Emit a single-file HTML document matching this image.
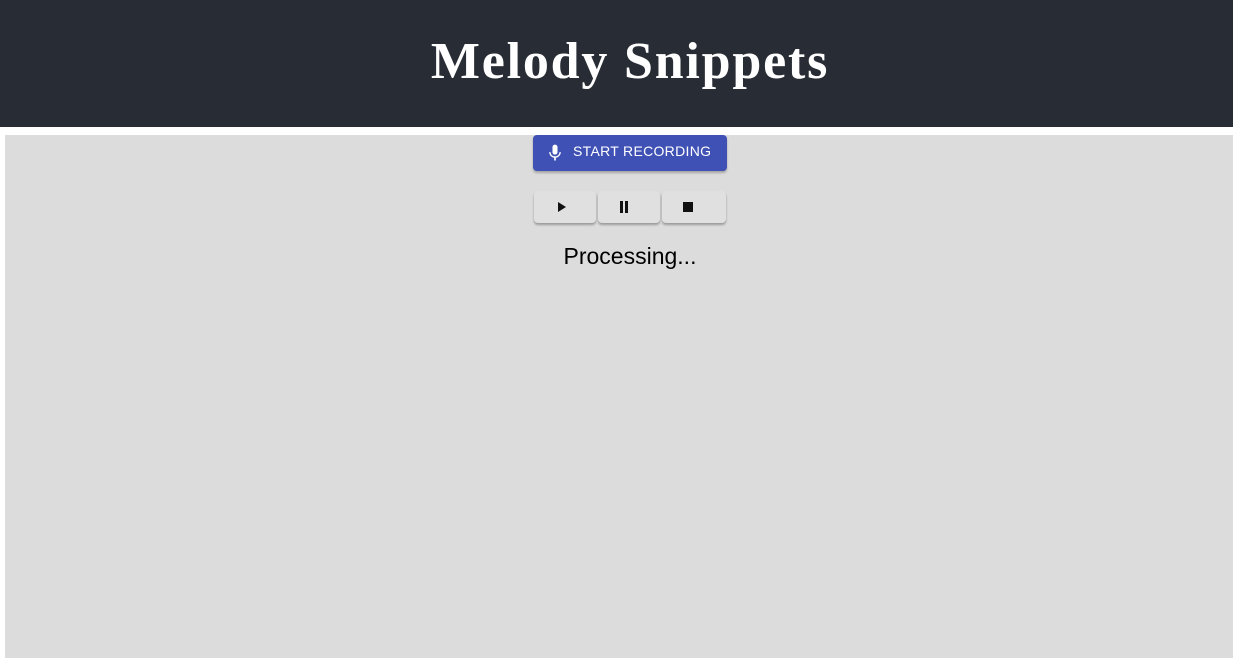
<!DOCTYPE html>
<html><head><style>
body{margin:0;width:1233px;height:658px;overflow:hidden;background:#fff;font-family:"Liberation Sans",sans-serif}
.hdr{position:absolute;left:0;top:0;width:1233px;height:127px;background:#282c34}
.hdr h1{margin:0;position:absolute;left:0;right:0;top:32px;text-align:center;color:#fff;font-family:"Liberation Serif",serif;font-weight:bold;font-size:52px;letter-spacing:1.8px;line-height:60px;padding-left:27px}
.panel{position:absolute;left:5px;top:135px;width:1228px;height:523px;background:#dcdcdc}
.rec{position:absolute;left:533px;top:135px;width:194px;height:36px;background:#3f51b5;border-radius:4px;box-shadow:0 2px 2px rgba(0,0,0,.25);color:#fff;font-size:14px;letter-spacing:.3px}
.rec span{position:absolute;left:40px;top:8px}
.rec svg{position:absolute;left:12px;top:8px}
.b{position:absolute;top:191px;height:32px;background:#e0e0e0;border-radius:4px;box-shadow:0 2px 2px rgba(0,0,0,.3)}
.b svg{position:absolute;top:50%;transform:translateY(-50%)}
.p{position:absolute;left:0;width:1233px;top:243px;text-align:center;font-size:23px;padding-left:27px;box-sizing:border-box}
</style></head><body>
<div class="hdr"><h1>Melody Snippets</h1></div>
<div class="panel"></div>
<div class="rec"><svg width="20" height="20" viewBox="0 0 24 24"><path fill="#fff" d="M12 14c1.66 0 3-1.34 3-3V5c0-1.66-1.34-3-3-3S9 3.340 9 5v6c0 1.66 1.34 3 3 3zm5.3-3c0 3-2.54 5.1-5.3 5.1S6.7 14 6.7 11H5c0 3.41 2.72 6.23 6 6.72V21h2v-3.28c3.28-.48 6-3.3 6-6.72h-1.7z"/></svg><span>START RECORDING</span></div>
<div class="b" style="left:534px;width:62px"><svg style="left:23px" width="10" height="12" viewBox="0 0 10 12"><path d="M1 1v10l8-5z" fill="#111"/></svg></div>
<div class="b" style="left:598px;width:62px"><svg style="left:21px" width="10" height="12" viewBox="0 0 10 12"><path d="M1 0h3v12H1zM6 0h3v12H6z" fill="#111"/></svg></div>
<div class="b" style="left:662px;width:64px"><svg style="left:21px" width="10" height="10" viewBox="0 0 10 10"><rect width="10" height="10" fill="#111"/></svg></div>
<div class="p">Processing...</div>
</body></html>
